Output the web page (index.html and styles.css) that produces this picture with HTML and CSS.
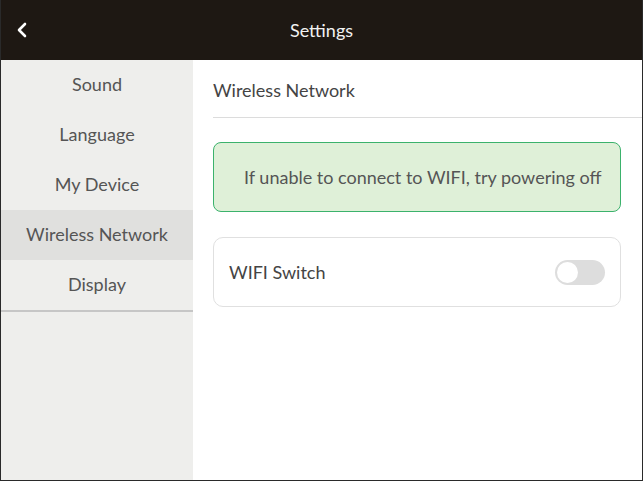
FILE: index.html
```html
<!DOCTYPE html>
<html lang="en">
<head>
  <meta charset="UTF-8" />
  <meta name="viewport" content="width=device-width, initial-scale=1.0"/>
  <title>Settings</title>
  <link rel="stylesheet" href="styles.css">
</head>
<body>
  <div id="app">
    <div class="header">
      <button class="back-btn" aria-label="Back">
        <svg width="12" height="16" viewBox="0 0 12 16">
          <path d="M9 2 L3 8 L9 14" fill="none" stroke="#fff" stroke-width="2.6" stroke-linecap="round" stroke-linejoin="round"/>
        </svg>
      </button>
      <div class="title">Settings</div>
    </div>
    <div class="main">
      <div class="sidebar">
        <ul class="menu">
          <li class="menu-item">Sound</li>
          <li class="menu-item">Language</li>
          <li class="menu-item">My Device</li>
          <li class="menu-item active">Wireless Network</li>
          <li class="menu-item">Display</li>
        </ul>
      </div>
      <div class="content">
        <div class="section-title">Wireless Network</div>
        <div class="notice">
          <div class="notice-text">If unable to connect to WIFI, try powering off and restarting the device</div>
        </div>
        <div class="card">
          <span class="card-label">WIFI Switch</span>
          <div class="switch"><div class="knob"></div></div>
        </div>
      </div>
    </div>
  </div>
</body>
</html>
```

FILE: styles.css
```css
* {
  box-sizing: border-box;
}
body {
  margin: 0;
  padding: 0;
  font-family: 'Lato', 'Liberation Sans', sans-serif;
  background: #fff;
}

#app {
  width: 643px;
  height: 481px;
  display: flex;
  flex-direction: column;
  border: 1px solid #2a2a2a;
  border-top: none;
  overflow: hidden;
}

.header {
  height: 60px;
  flex-shrink: 0;
  background: #1e1813;
  display: flex;
  align-items: center;
  margin: 0 -1px;
}

.back-btn {
  background: none;
  border: none;
  padding: 0;
  margin-left: 16px;
  width: 12px;
  height: 16px;
  display: flex;
  cursor: pointer;
}

.title {
  flex: 1;
  text-align: center;
  color: #f2f2f2;
  font-size: 18px;
  margin-right: 28px;
}

.main {
  flex: 1;
  display: flex;
  min-width: 0;
}

.sidebar {
  width: 192px;
  flex-shrink: 0;
  background: #eeeeec;
}

.menu {
  list-style: none;
  margin: 0;
  padding: 0;
  border-bottom: 2px solid #c6c6c6;
}

.menu-item {
  height: 50px;
  line-height: 49px;
  text-align: center;
  font-size: 18px;
  color: #555;
  white-space: nowrap;
}

.menu-item.active {
  background: #e0e0de;
}

.content {
  flex: 1;
  min-width: 0;
  padding: 0 0 0 20px;
}

.section-title {
  height: 58px;
  line-height: 60px;
  font-size: 18px;
  color: #444;
  border-bottom: 1px solid #dcdcdc;
}

.notice {
  margin: 24px 21px 0 0;
  height: 70px;
  background: #dff0d8;
  border: 1px solid #3bb26c;
  border-radius: 8px;
  padding: 0 18px 0 30px;
  display: flex;
  align-items: center;
}

.notice-text {
  min-width: 0;
  white-space: nowrap;
  overflow: hidden;
  font-size: 18px;
  color: #555;
}

.card {
  margin: 25px 21px 0 0;
  height: 70px;
  border: 1px solid #e0e0e0;
  border-radius: 10px;
  padding: 0 15px 0 15px;
  display: flex;
  align-items: center;
  justify-content: space-between;
}

.card-label {
  font-size: 18px;
  color: #444;
}

.switch {
  width: 50px;
  height: 25px;
  border-radius: 13px;
  background: #dddddd;
  padding: 2px;
}

.knob {
  width: 21px;
  height: 21px;
  border-radius: 50%;
  background: #fff;
}
```
